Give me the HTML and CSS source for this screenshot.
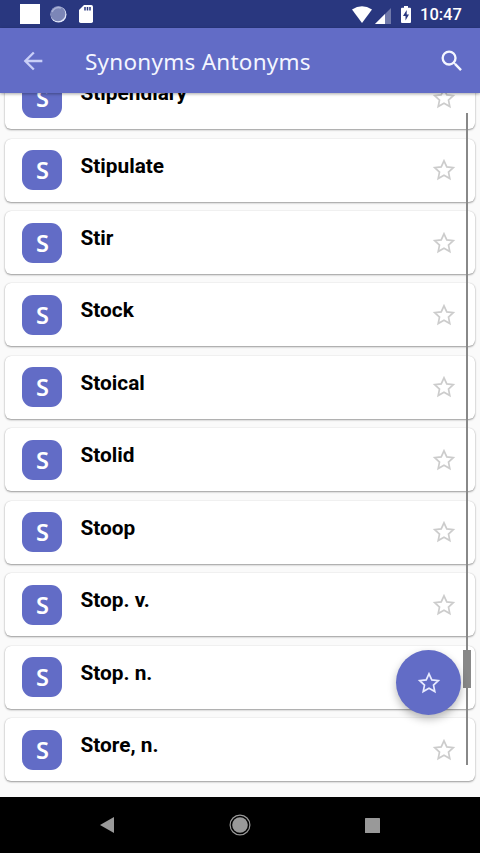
FILE: index.html
```html
<!DOCTYPE html>
<html lang="en">
<head>
<meta charset="utf-8">
<title>Synonyms Antonyms</title>
<link rel="stylesheet" href="styles.css">
</head>
<body>
<svg class="defs" width="0" height="0">
  <symbol id="star" viewBox="0 0 28 28"><path d="M14 4.800L16.800 10.900 23.300 11.600 18.500 16.050 19.800 22.500 14 19.300 8.200 22.500 9.500 16.050 4.700 11.600 11.200 10.900z" fill="none" stroke="currentColor" stroke-width="1.700"/></symbol>
</svg>
<div class="screen">
  <div class="status">
    <div class="notifications">
      <span class="square"></span>
      <svg width="17" height="17" viewBox="0 0 17 17"><circle cx="8.500" cy="8.500" r="8" fill="#e3e8fa"/><circle cx="7.900" cy="7.800" r="7.500" fill="#7c86b7"/><path d="M2 6a7 7 0 0 1 9-4" fill="none" stroke="#a9b1d6" stroke-width="1.500"/></svg>
      <svg width="14" height="18" viewBox="0 0 14 18"><path fill="#fff" d="M5 0h7.300Q14 0 14 1.800v14.400Q14 18 12.300 18H1.700Q0 18 0 16.200V5z"/><path d="M6 2v3.500M8.500 2v3.500M11 2v3.500" stroke="#29377f" stroke-width="1.500"/></svg>
    </div>
    <div class="system">
      <svg width="20" height="17" viewBox="0 0 20 17"><path fill="#fff" d="M0 3.500Q10-3.200 20 3.500L10 17z"/></svg>
      <svg class="signal" width="16" height="16" viewBox="0 0 16 16"><path fill="#7079aa" d="M16 0v16H0z"/><path fill="#fff" d="M10 6v10H0z"/></svg>
      <svg class="battery" width="10" height="17" viewBox="0 0 10 17"><path fill="#fff" d="M3 0h4v1.700h2q1 0 1 1V16q0 1-1 1H1q-1 0-1-1V2.700q0-1 1-1h2z"/><path fill="#29377f" d="M5.700 4L2 10h2.500v4.500L8 8.500H5.700z"/></svg>
      <span class="clock">10:47</span>
    </div>
  </div>
  <header class="bar">
    <svg class="back" width="28" height="28" viewBox="0 0 24 24"><path d="M20 11H7.830l5.590-5.590L12 4l-8 8 8 8 1.410-1.410L7.830 13H20z"/></svg>
    <h1>Synonyms Antonyms</h1>
    <svg class="search" width="28" height="28" viewBox="0 0 24 24"><path d="M15.500 14h-.79l-.28-.27A6.471 6.471 0 0 0 16 9.500 6.500 6.500 0 1 0 9.500 16c1.610 0 3.090-.59 4.230-1.570l.27.28v.79l5 4.990L20.490 19zM9.500 14a4.500 4.500 0 1 1 0-9 4.500 4.500 0 0 1 0 9z"/></svg>
  </header>
  <main class="content">
    <div class="list">
      <article class="card"><span class="badge">S</span><h2>Stipendiary</h2><svg class="star"><use href="#star"/></svg></article>
      <article class="card"><span class="badge">S</span><h2>Stipulate</h2><svg class="star"><use href="#star"/></svg></article>
      <article class="card"><span class="badge">S</span><h2>Stir</h2><svg class="star"><use href="#star"/></svg></article>
      <article class="card"><span class="badge">S</span><h2>Stock</h2><svg class="star"><use href="#star"/></svg></article>
      <article class="card"><span class="badge">S</span><h2>Stoical</h2><svg class="star"><use href="#star"/></svg></article>
      <article class="card"><span class="badge">S</span><h2>Stolid</h2><svg class="star"><use href="#star"/></svg></article>
      <article class="card"><span class="badge">S</span><h2>Stoop</h2><svg class="star"><use href="#star"/></svg></article>
      <article class="card"><span class="badge">S</span><h2>Stop. v.</h2><svg class="star"><use href="#star"/></svg></article>
      <article class="card"><span class="badge">S</span><h2>Stop. n.</h2><svg class="star"><use href="#star"/></svg></article>
      <article class="card"><span class="badge">S</span><h2>Store, n.</h2><svg class="star"><use href="#star"/></svg></article>
    </div>
    <div class="track"></div>
    <div class="thumb"></div>
    <div class="fab"><svg class="star"><use href="#star"/></svg></div>
  </main>
  <nav class="nav">
    <svg width="14" height="16" viewBox="0 0 14 16"><path fill="#999" d="M14 0v16L0 8z"/></svg>
    <svg width="22" height="22" viewBox="0 0 22 22"><circle cx="11" cy="11" r="9.900" fill="none" stroke="#999" stroke-width="1.200"/><circle cx="11" cy="11" r="7.800" fill="#999"/></svg>
    <svg width="15" height="15" viewBox="0 0 15 15"><rect width="15" height="15" rx=".5" fill="#999"/></svg>
  </nav>
</div>
</body>
</html>
```

FILE: styles.css
```css
* { box-sizing: border-box; }
body { margin: 0; font-family: Roboto, sans-serif; }
svg { display: block; flex: none; }
.defs { position: absolute; }
.screen { width: 480px; height: 853px; display: flex; flex-direction: column; overflow: hidden; background: #fafafa; }

.status { height: 28px; flex: none; display: flex; justify-content: space-between; padding: 0 19.500px 0 20px; background: #29377f; }
.notifications { display: flex; align-items: center; gap: 10px; }
.notifications svg:last-child { margin-left: 2px; }
.square { width: 20px; height: 20px; background: #fff; }
.system { display: flex; align-items: center; color: #fff; }
.signal { margin: 3px 10px 0 3px; }
.battery { margin-right: 9px; }
.clock { font-size: 16.500px; font-weight: 500; line-height: 28px; padding-top: 2px; width: 40.500px; white-space: nowrap; }

.bar { height: 65px; flex: none; display: flex; align-items: center; padding: 0 14px 0 19px; background: #626cc6; box-shadow: 0 1px 3px rgba(0, 0, 0, .35); z-index: 1; }
.back { fill: #c9cff8; }
.bar h1 { flex: 1; margin: 0 0 0 38px; color: #f4f6ff; font: 400 22.500px/32px "Noto Sans", sans-serif; letter-spacing: .25px; white-space: nowrap; padding-top: 2px; }
.search { fill: #f4f6ff; }

.content { position: relative; flex: 1; min-height: 0; overflow: hidden; }
.list { display: flex; flex-direction: column; gap: 9.430px; margin-top: -26.800px; padding: 0 5px; }
.card { height: 63px; flex: none; display: flex; align-items: center; padding: 0 17px 0 17px; background: #fff; border-radius: 6px; box-shadow: 0 1px 2px rgba(0, 0, 0, .38), 0 0 1px rgba(0, 0, 0, .2); }
.badge { width: 40px; height: 40px; border-radius: 11px; background: #626cc6; color: #fff; font: 600 23.500px/40px "Noto Sans", sans-serif; text-align: center; padding-left: 1px; }
.card h2 { flex: 1; margin: 0 0 9px 18.500px; font-size: 20.800px; line-height: 26px; font-weight: 700; color: #000; }
.star { width: 28px; height: 28px; color: #ccc; }

.track { position: absolute; left: 466px; top: 20px; width: 1.500px; height: 652px; background: #888; }
.thumb { position: absolute; left: 463px; top: 557px; width: 8px; height: 38px; background: #888; }
.fab { position: absolute; left: 396px; top: 557px; width: 65px; height: 65px; border-radius: 50%; display: flex; align-items: center; justify-content: center; background: #626cc6; box-shadow: 0 4px 8px rgba(0, 0, 0, .28); }
.fab .star { color: #e8ebff; }

.nav { height: 56px; flex: none; display: flex; align-items: center; justify-content: space-between; padding: 0 100px; background: #000; }
```
